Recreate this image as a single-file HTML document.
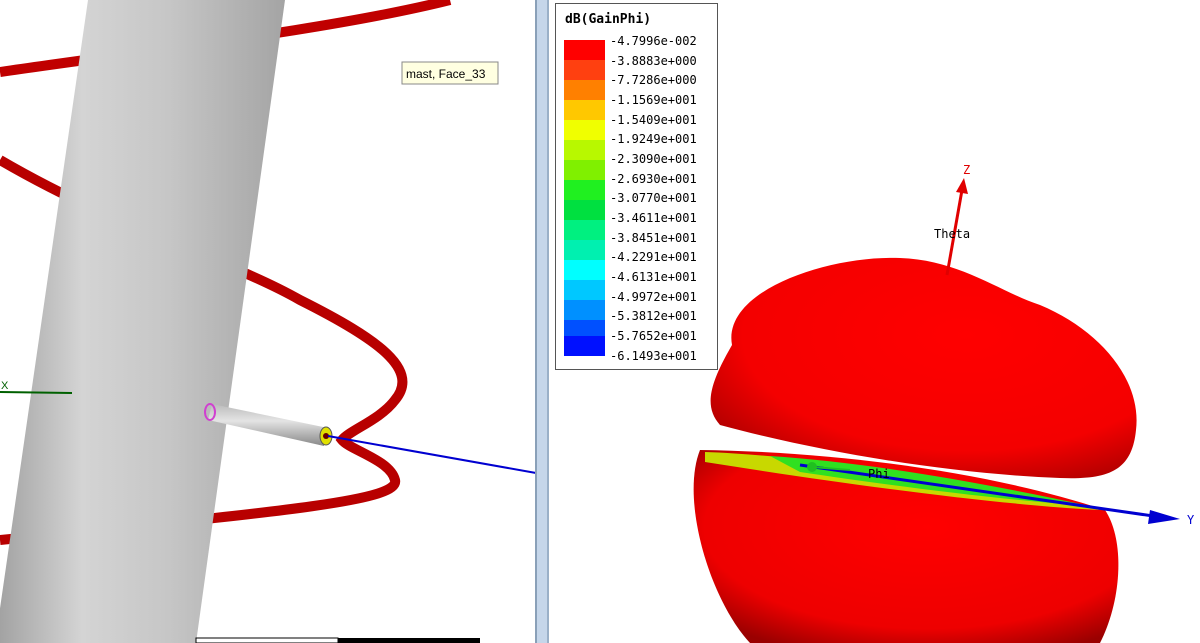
<!DOCTYPE html>
<html><head><style>
html,body{margin:0;padding:0;width:1200px;height:643px;overflow:hidden;background:#fff;font-family:"Liberation Sans",sans-serif}
.m{font-family:"DejaVu Sans Mono","Liberation Mono",monospace}
</style></head><body>
<svg width="1200" height="643" viewBox="0 0 1200 643" style="position:absolute;left:0;top:0">
<defs>
<linearGradient id="mast" x1="0" y1="0" x2="1" y2="0">
<stop offset="0" stop-color="#a0a0a0"/><stop offset="0.3" stop-color="#d4d4d4"/><stop offset="0.6" stop-color="#c6c6c6"/><stop offset="1" stop-color="#a4a4a4"/>
</linearGradient>
<radialGradient id="up" cx="0.6" cy="0.35" r="0.75">
<stop offset="0" stop-color="#ff0000"/><stop offset="0.7" stop-color="#f40000"/><stop offset="1" stop-color="#a80000"/>
</radialGradient>
<radialGradient id="lo" cx="0.55" cy="0.4" r="0.7">
<stop offset="0" stop-color="#ff0000"/><stop offset="0.75" stop-color="#ee0000"/><stop offset="1" stop-color="#9a0000"/>
</radialGradient>
<linearGradient id="cyl" x1="0" y1="0" x2="0" y2="1">
<stop offset="0" stop-color="#bbb"/><stop offset="0.4" stop-color="#e4e4e4"/><stop offset="1" stop-color="#888"/>
</linearGradient>
</defs>
<path d="M0,72 C150,50 330,30 450,0" stroke="#c00000" stroke-width="10" fill="none"/>
<path d="M0,160 C120,230 230,260 300,300 C380,340 420,370 395,400 C380,420 350,430 342,440 C350,450 390,460 395,480 C400,500 300,510 0,540" stroke="#b80000" stroke-width="10" fill="none"/>
<polygon points="88,0 285,0 196,643 -5,643" fill="url(#mast)"/>
<path d="M0,392 L72,393" stroke="#006000" stroke-width="2"/>
<text x="1" y="389" font-size="11" fill="#006000">X</text>
<polygon points="212,404 328,428 324,446 208,420" fill="url(#cyl)"/>
<ellipse cx="210" cy="412" rx="5" ry="8" fill="none" stroke="#d040d0" stroke-width="2"/>
<ellipse cx="326" cy="436" rx="6" ry="9" fill="#e0e000" stroke="#555" stroke-width="1"/>
<circle cx="326" cy="436" r="3" fill="#600"/>
<path d="M328,436 L536,473" stroke="#0000d0" stroke-width="2"/>
<rect x="196" y="638" width="142" height="5" fill="#fff" stroke="#000" stroke-width="1"/>
<rect x="338" y="638" width="142" height="5" fill="#000"/>
<rect x="402" y="62" width="96" height="22" fill="#ffffe1" stroke="#888"/>
<text x="406" y="78" font-size="12" fill="#000">mast, Face_33</text>
<rect x="535" y="0" width="2" height="643" fill="#8aa0b8"/>
<rect x="537" y="0" width="10" height="643" fill="#c5d6ea"/>
<rect x="547" y="0" width="2" height="643" fill="#9ab0c8"/>
<path d="M700,450 C680,500 710,600 750,643 L1100,643 C1122,600 1125,540 1105,510 C1000,475 850,452 700,450 Z" fill="url(#lo)"/>
<path d="M705,452 C800,455 950,478 1100,510 C1000,505 850,485 705,462 Z" fill="#c8d800"/>
<path d="M770,456 C860,462 960,478 1090,506 C1000,500 880,484 800,472 Z" fill="#30e020"/>
<path d="M732,345 C722,290 830,255 900,258 C960,260 1000,292 1040,305 C1100,330 1142,380 1136,430 C1132,470 1110,480 1060,478 C950,474 820,452 720,425 C702,405 712,380 732,345 Z" fill="url(#up)"/>
<path d="M800,465 L1160,517" stroke="#0000d0" stroke-width="3"/>
<polygon points="1150,510 1180,519 1148,524" fill="#0000d0"/>
<text x="1187" y="524" font-size="12" fill="#0000d0" class="m">Y</text>
<circle cx="812" cy="467" r="5" fill="#20c020"/>
<path d="M812,467 L850,470" stroke="#20c020" stroke-width="2"/>
<text x="868" y="478" font-size="12" fill="#000" class="m">Phi</text>
<path d="M947,275 L962,190" stroke="#e00000" stroke-width="3"/>
<polygon points="956,192 964,178 968,194" fill="#e00000"/>
<text x="963" y="174" font-size="12" fill="#e00000" class="m">Z</text>
<text x="934" y="238" font-size="12" fill="#000" class="m">Theta</text>
<rect x="555.5" y="3.5" width="162" height="366" fill="#fff" stroke="#555"/>
<text x="565" y="23" font-size="13" font-weight="bold" class="m" fill="#000">dB(GainPhi)</text>
<g>
<rect x="564" y="40" width="41" height="20" fill="#ff0000"/>
<rect x="564" y="60" width="41" height="20" fill="#ff4010"/>
<rect x="564" y="80" width="41" height="20" fill="#ff8000"/>
<rect x="564" y="100" width="41" height="20" fill="#ffc800"/>
<rect x="564" y="120" width="41" height="20" fill="#f0ff00"/>
<rect x="564" y="140" width="41" height="20" fill="#b8f800"/>
<rect x="564" y="160" width="41" height="20" fill="#80f000"/>
<rect x="564" y="180" width="41" height="20" fill="#20f020"/>
<rect x="564" y="200" width="41" height="20" fill="#00e040"/>
<rect x="564" y="220" width="41" height="20" fill="#00f080"/>
<rect x="564" y="240" width="41" height="20" fill="#00f0b0"/>
<rect x="564" y="260" width="41" height="20" fill="#00ffff"/>
<rect x="564" y="280" width="41" height="20" fill="#00c8ff"/>
<rect x="564" y="300" width="41" height="20" fill="#0090ff"/>
<rect x="564" y="320" width="41" height="16" fill="#0050ff"/>
<rect x="564" y="336" width="41" height="20" fill="#0010ff"/>
</g>
<g font-size="12" class="m" fill="#000">
<text x="610" y="45">-4.7996e-002</text>
<text x="610" y="65">-3.8883e+000</text>
<text x="610" y="84">-7.7286e+000</text>
<text x="610" y="104">-1.1569e+001</text>
<text x="610" y="124">-1.5409e+001</text>
<text x="610" y="143">-1.9249e+001</text>
<text x="610" y="163">-2.3090e+001</text>
<text x="610" y="183">-2.6930e+001</text>
<text x="610" y="202">-3.0770e+001</text>
<text x="610" y="222">-3.4611e+001</text>
<text x="610" y="242">-3.8451e+001</text>
<text x="610" y="261">-4.2291e+001</text>
<text x="610" y="281">-4.6131e+001</text>
<text x="610" y="301">-4.9972e+001</text>
<text x="610" y="320">-5.3812e+001</text>
<text x="610" y="340">-5.7652e+001</text>
<text x="610" y="360">-6.1493e+001</text>
</g>
</svg>
</body></html>
